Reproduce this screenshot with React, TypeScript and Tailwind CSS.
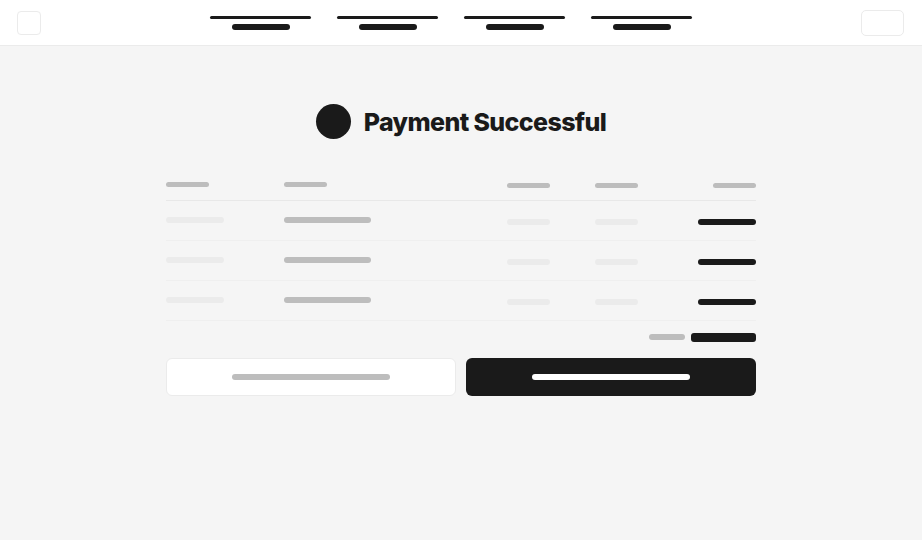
const navItems = ['Cart', 'Delivery', 'Payment', 'Summary']
const items = [1, 2, 3]

function Bar({ className }: { className: string }) {
  return <span className={`block h-1.5 rounded-full ${className}`} />
}

function Header() {
  return (
    <header className="flex items-center justify-between border-b border-[#ebebeb] bg-white pt-2.5 pb-[9px] pl-[17px] pr-[18px]">
      <a href="#home" aria-label="Home" className="size-6 rounded border border-[#ebebeb]" />
      <nav className="flex gap-[26px]">
        {navItems.map((item) => (
          <a key={item} href="#step" aria-label={item} className="flex w-[101px] flex-col items-center gap-[5px]">
            <span className="h-[3px] w-full rounded-full bg-[#1a1a1a]" />
            <Bar className="w-[58px] bg-[#1a1a1a]" />
          </a>
        ))}
      </nav>
      <button aria-label="Account" className="h-[26px] w-[43px] rounded-[5px] border border-[#ebebeb]" />
    </header>
  )
}

function OrderTable() {
  return (
    <table className="mt-8 w-full table-fixed border-collapse">
      <colgroup>
        <col className="w-[20%]" />
        <col className="w-[30%]" />
        <col className="w-[15%]" />
        <col className="w-[15%]" />
        <col className="w-[20%]" />
      </colgroup>
      <thead>
        <tr className="h-[29px] border-b border-[#e8e8e8] align-top">
          <th aria-label="Item" className="p-0 pt-[11px]">
            <span className="block h-[5px] w-[43px] rounded-full bg-[#bdbdbd]" />
          </th>
          <th aria-label="Description" className="p-0 pt-[11px]">
            <span className="block h-[5px] w-[43px] rounded-full bg-[#bdbdbd]" />
          </th>
          {['Quantity', 'Price', 'Amount'].map((label) => (
            <th key={label} aria-label={label} className="p-0 pt-3">
              <span className="ml-auto block h-[5px] w-[43px] rounded-full bg-[#bdbdbd]" />
            </th>
          ))}
        </tr>
      </thead>
      <tbody>
        {items.map((item) => (
          <tr key={item} className="h-10 border-b border-[#efefef] align-top">
            <td className="p-0 pt-4">
              <Bar className="w-[58px] bg-[#ebebeb]" />
            </td>
            <td className="p-0 pt-4">
              <Bar className="w-[87px] bg-[#bdbdbd]" />
            </td>
            <td className="p-0 pt-[18px]">
              <Bar className="ml-auto w-[43px] bg-[#ebebeb]" />
            </td>
            <td className="p-0 pt-[18px]">
              <Bar className="ml-auto w-[43px] bg-[#ebebeb]" />
            </td>
            <td className="p-0 pt-[18px]">
              <Bar className="ml-auto w-[58px] bg-[#1a1a1a]" />
            </td>
          </tr>
        ))}
      </tbody>
    </table>
  )
}

export default function App() {
  return (
    <div className="min-h-screen border-r-2 border-white bg-[#f5f5f5] font-['Inter',sans-serif] text-[#1a1a1a]">
      <Header />
      <main className="mx-auto max-w-[590px] pt-[58px]">
        <div className="flex items-center justify-center gap-[13px]">
          <span className="size-[35px] shrink-0 rounded-full bg-[#1a1a1a]" />
          <h1 className="text-[25px] leading-8 font-extrabold tracking-tight">Payment Successful</h1>
        </div>

        <OrderTable />

        <div className="mt-3 flex items-center justify-end gap-1.5">
          <Bar className="w-9 bg-[#bdbdbd]" />
          <span className="h-[9px] w-[65px] rounded-[3px] bg-[#1a1a1a]" />
        </div>

        <div className="mt-4 grid grid-cols-2 gap-2.5">
          <button
            aria-label="View order"
            className="flex h-[38px] items-center justify-center rounded-md border border-[#ebebeb] bg-white"
          >
            <Bar className="w-[158px] bg-[#bdbdbd]" />
          </button>
          <button
            aria-label="Continue"
            className="flex h-[38px] items-center justify-center rounded-md bg-[#1a1a1a]"
          >
            <Bar className="w-[158px] bg-white" />
          </button>
        </div>
      </main>
    </div>
  )
}
